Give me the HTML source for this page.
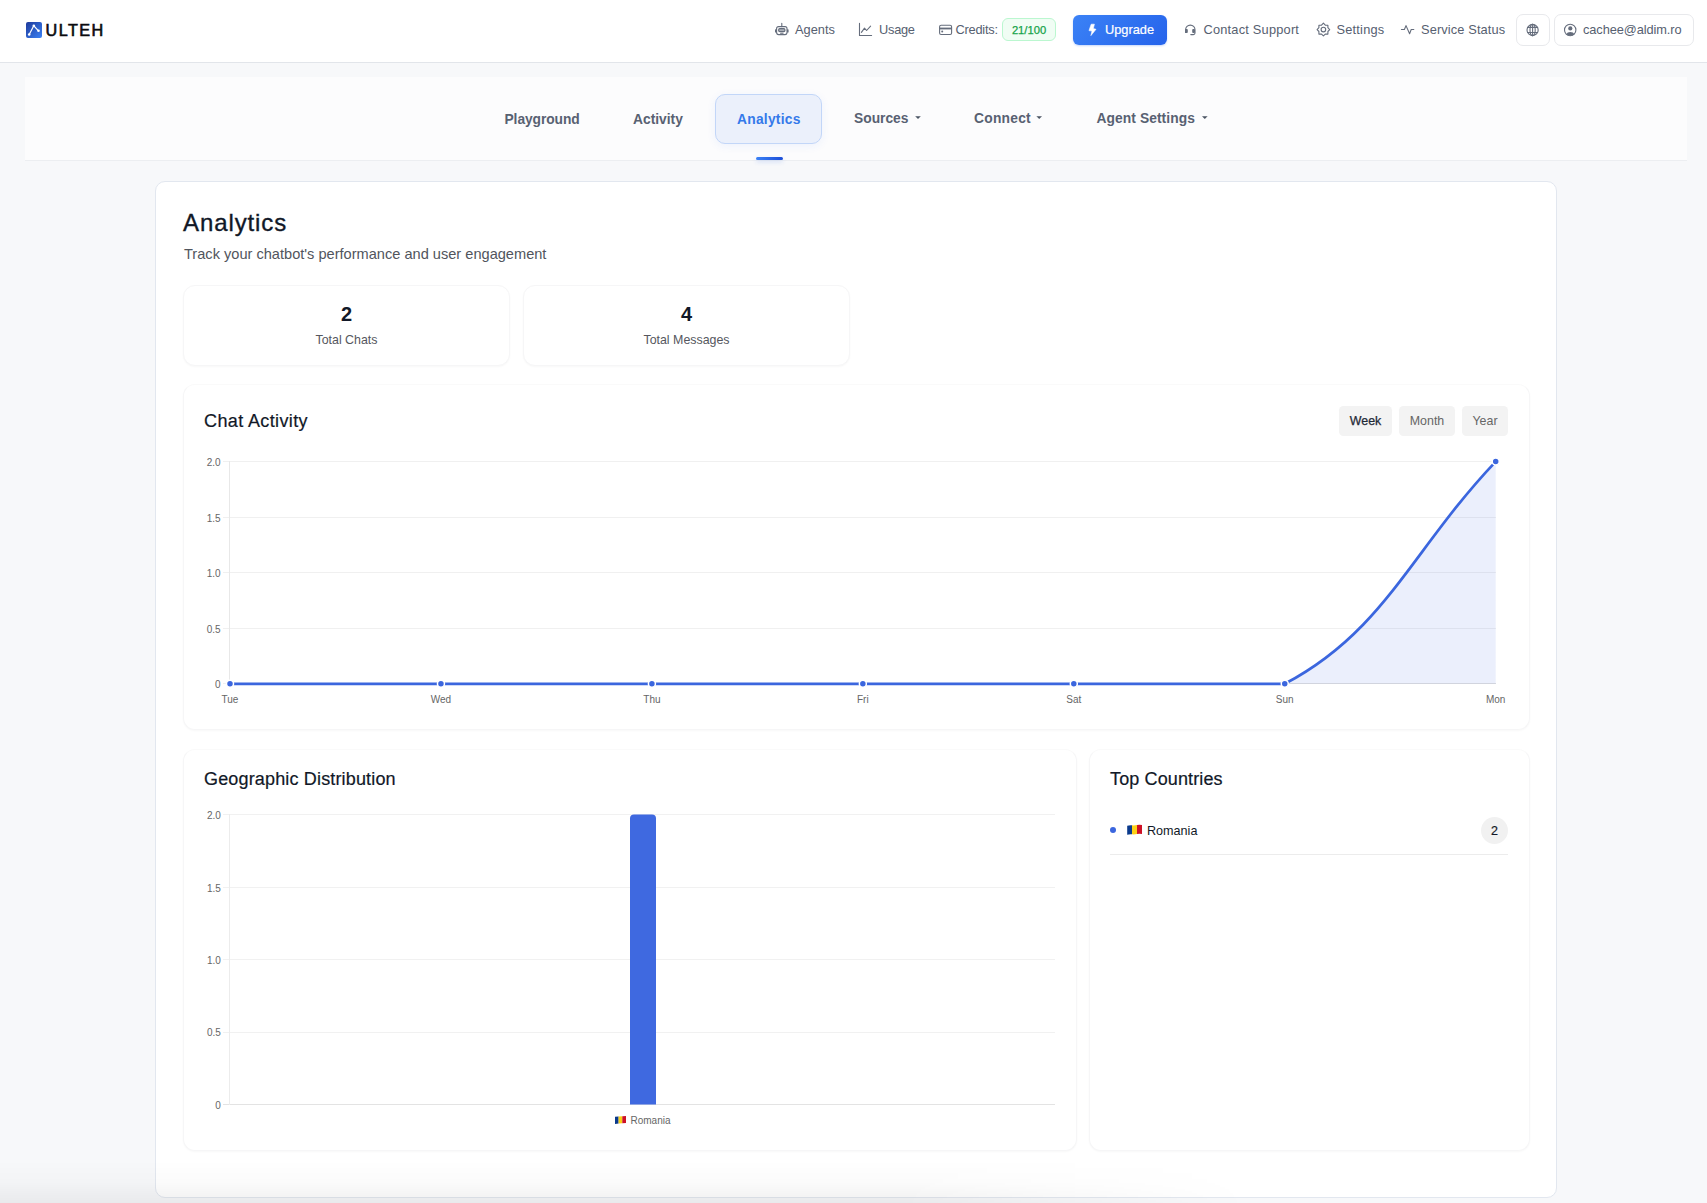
<!DOCTYPE html>
<html><head><meta charset="utf-8">
<style>
*{box-sizing:border-box;margin:0;padding:0}
html,body{width:1707px;height:1203px;overflow:hidden}
body{background:#f7f8fa;font-family:"Liberation Sans",sans-serif;position:relative;color:#111827}
.abs{position:absolute;white-space:nowrap}
#hdr{position:absolute;left:0;top:0;width:1707px;height:63px;background:#fff;border-bottom:1px solid #e2e5ea}
.nav{font-size:12.8px;line-height:16px;color:#566070;top:22px}
.badge{position:absolute;left:1002px;top:18px;width:54px;height:23px;border:1px solid #bbf7d0;background:#f0fdf4;border-radius:6px;color:#16a34a;font-size:11.2px;line-height:23px;text-align:center;-webkit-text-stroke:.25px #16a34a}
.upg{position:absolute;left:1073px;top:15px;width:94px;height:30px;border-radius:6px;background:linear-gradient(135deg,#3b82f6,#2563eb);box-shadow:0 1px 2px rgba(37,99,235,.25)}
.obtn{position:absolute;top:14px;height:32px;border:1px solid #e8e9ec;border-radius:7px;background:#fff}
#tabs{position:absolute;left:25px;top:77px;width:1662px;height:84px;background:#fcfcfd;border-bottom:1px solid #eceef1}
.tab{font-size:13.8px;font-weight:700;color:#586172;line-height:18px}
.pill{position:absolute;left:715px;top:94px;width:107px;height:50px;border:1px solid #c2d6f8;background:#ebf0fb;border-radius:10px;box-shadow:0 2px 10px rgba(37,99,235,.07)}
#main{position:absolute;left:155px;top:181px;width:1402px;height:1017px;background:#fff;border:1px solid #e2e7ef;border-radius:10px}
.card{position:absolute;background:#fff;border:1px solid #f6f6f7;border-radius:12px;box-shadow:0 1px 2px rgba(0,0,0,.03)}
.tbtn{position:absolute;top:406px;height:30px;background:#f3f3f3;border-radius:4.5px;font-size:12.4px;line-height:30px;text-align:center;color:#666}
</style></head><body>
<div id="hdr"></div>
<div class="abs" style="left:45.5px;top:21.2px;font-size:16.2px;font-weight:400;letter-spacing:1.45px;-webkit-text-stroke:.6px #0b0b0f;line-height:18px;color:#0b0b0f">ULTEH</div>
<div class="abs nav" style="left:795px">Agents</div>
<div class="abs nav" style="left:879px;letter-spacing:-.25px">Usage</div>
<div class="abs nav" style="left:955.5px;letter-spacing:-.23px">Credits:</div>
<div class="badge">21/100</div>
<div class="upg"></div>
<div class="abs nav" style="left:1105px;color:#fff;-webkit-text-stroke:.2px #fff">Upgrade</div>
<div class="abs nav" style="left:1203.5px;letter-spacing:.21px">Contact Support</div>
<div class="abs nav" style="left:1336.5px;letter-spacing:.21px">Settings</div>
<div class="abs nav" style="left:1421px;letter-spacing:.13px">Service Status</div>
<div class="obtn" style="left:1516px;width:34px"></div>
<div class="obtn" style="left:1553.5px;width:140.5px"></div>
<div class="abs nav" style="left:1583px;letter-spacing:-.09px">cachee@aldim.ro</div>

<div id="tabs"></div>
<div class="pill"></div>
<div class="abs tab" style="left:504.5px;top:111px;letter-spacing:-.08px">Playground</div>
<div class="abs tab" style="left:633px;top:111px">Activity</div>
<div class="abs tab" style="left:737px;top:111px;letter-spacing:.25px;color:#3479ea">Analytics</div>
<div class="abs tab" style="left:854px;top:110px">Sources</div>
<div class="abs tab" style="left:974px;top:110px;letter-spacing:.25px">Connect</div>
<div class="abs tab" style="left:1096.5px;top:110px;letter-spacing:.08px">Agent Settings</div>
<div class="abs" style="left:756px;top:157px;width:27px;height:3px;border-radius:2px;background:linear-gradient(90deg,#3b82f6,#1d4ed8);box-shadow:0 2px 4px rgba(37,99,235,.18)"></div>

<div id="main"></div>
<div class="abs" style="left:183px;top:207.5px;font-size:24px;line-height:30px;letter-spacing:.9px;-webkit-text-stroke:.35px #111827;color:#111827">Analytics</div>
<div class="abs" style="left:184px;top:245px;font-size:14.6px;line-height:18px;color:#51555d">Track your chatbot's performance and user engagement</div>

<div class="card" style="left:183px;top:285px;width:327px;height:81px"></div>
<div class="card" style="left:523px;top:285px;width:327px;height:81px"></div>
<div class="abs" style="left:183px;top:303px;width:327px;text-align:center;font-size:20px;font-weight:700;line-height:22px">2</div>
<div class="abs" style="left:183px;top:333px;width:327px;text-align:center;font-size:12.4px;line-height:15px;color:#55575e">Total Chats</div>
<div class="abs" style="left:523px;top:303px;width:327px;text-align:center;font-size:20px;font-weight:700;line-height:22px">4</div>
<div class="abs" style="left:523px;top:333px;width:327px;text-align:center;font-size:12.4px;line-height:15px;color:#55575e">Total Messages</div>

<div class="card" style="left:183px;top:384px;width:1347px;height:346px;border-top-color:#fafafa"></div>
<div class="abs" style="left:204px;top:410px;font-size:18px;line-height:22px;letter-spacing:.38px;-webkit-text-stroke:.2px #111827;color:#111827">Chat Activity</div>
<div class="tbtn" style="left:1339px;width:53px;color:#1f2937;-webkit-text-stroke:.25px #1f2937">Week</div>
<div class="tbtn" style="left:1399px;width:56px">Month</div>
<div class="tbtn" style="left:1462px;width:46px">Year</div>

<div class="card" style="left:183px;top:749px;width:894px;height:402px;border-top-color:#fafafa"></div>
<div class="card" style="left:1089px;top:749px;width:441px;height:402px;border-top-color:#fafafa"></div>
<div class="abs" style="left:204px;top:768px;font-size:18px;line-height:22px;letter-spacing:.16px;-webkit-text-stroke:.2px #111827;color:#111827">Geographic Distribution</div>
<div class="abs" style="left:1110px;top:768px;font-size:18px;line-height:22px;letter-spacing:.13px;-webkit-text-stroke:.2px #111827;color:#111827">Top Countries</div>
<div class="abs" style="left:1147px;top:822.7px;font-size:12.6px;line-height:16px;color:#111827">Romania</div>
<div class="abs" style="left:1481px;top:817px;width:27px;height:27px;border-radius:50%;background:#f1f1f1;font-size:12.5px;line-height:29px;text-align:center;-webkit-text-stroke:.2px #111827;color:#111827">2</div>
<div class="abs" style="left:1110px;top:854px;width:398px;height:1px;background:#ececec"></div>

<!-- header icons -->
<svg class="abs" style="left:0;top:0" width="1707" height="62" viewBox="0 0 1707 62">
<defs><linearGradient id="lg" x1="0" y1="0" x2="1" y2="1"><stop offset="0" stop-color="#1e3a9a"/><stop offset="1" stop-color="#3b82f6"/></linearGradient></defs>
<rect x="26" y="22" width="16" height="16" rx="2" fill="url(#lg)"/>
<polyline points="29.2,34.5 33.8,25.8 38.5,30.8" fill="none" stroke="#fff" stroke-width="1.2"/>
<circle cx="29.2" cy="34.5" r="1.3" fill="#fff"/><circle cx="33.8" cy="25.8" r="1.3" fill="#fff"/><circle cx="38.5" cy="30.8" r="1.3" fill="#fff"/>
<g fill="none" stroke="#656d7c" stroke-width="1.1" stroke-linecap="round" stroke-linejoin="round">
 <!-- robot -->
 <rect x="776.6" y="26.6" width="10.4" height="8" rx="2"/>
 <rect x="778.6" y="28.6" width="6.4" height="3" rx="1.3" fill="rgba(101,109,124,.55)"/>
 <line x1="781.8" y1="23.4" x2="781.8" y2="26.6"/>
 <line x1="780.6" y1="33.2" x2="783" y2="33.2"/>
 <!-- usage chart -->
 <polyline points="859.5,23.4 859.5,35.5 871.6,35.5"/>
 <polyline points="861.4,32.4 864.5,28.2 866.6,30.5 870.6,26.2"/>
 <!-- card -->
 <rect x="939.6" y="25.2" width="12" height="9.3" rx="1.5"/>
 <!-- headset -->
 <path d="M1185.6 32.5 V29.8 a4.7 4.7 0 0 1 9.4 0 V33 q0 1.6 -1.6 1.6 h-2.6"/>
 <!-- gear -->
 <path d="M1323.4 23.2 L1325.3 25.2 L1327.9 25.2 L1327.9 27.7 L1329.7 29.6 L1327.9 31.5 L1327.9 34.1 L1325.3 34.1 L1323.4 35.9 L1321.5 34.1 L1318.9 34.1 L1318.9 31.5 L1317.1 29.6 L1318.9 27.7 L1318.9 25.2 L1321.5 25.2 Z"/>
 <circle cx="1323.4" cy="29.6" r="2.3"/>
 <!-- pulse -->
 <polyline points="1401.4,29.5 1404.4,29.5 1406,25.6 1409.6,33.8 1411.2,29.5 1413.8,29.5"/>
 <!-- globe -->
 <circle cx="1532.6" cy="30" r="5.6"/>
 <ellipse cx="1532.6" cy="30" rx="2.6" ry="5.6"/>
 <line x1="1532.6" y1="24.4" x2="1532.6" y2="35.6"/>
 <line x1="1527.6" y1="27.4" x2="1537.6" y2="27.4"/>
 <line x1="1527.6" y1="32.5" x2="1537.6" y2="32.5"/>
 <!-- user -->
 <circle cx="1570.2" cy="30" r="5.7"/>
</g>
<g fill="#656d7c">
 <rect x="775" y="29.3" width="1.6" height="3.2" rx=".6"/><rect x="787" y="29.3" width="1.6" height="3.2" rx=".6"/>
 <rect x="939.6" y="27.6" width="12" height="1.8"/>
 <circle cx="942.2" cy="31.6" r="1"/>
 <rect x="1185" y="29" width="2.8" height="3.9" rx="1"/><rect x="1192.2" y="29" width="2.8" height="3.9" rx="1"/>
 <circle cx="1570.3" cy="28.4" r="2.1"/>
 <path d="M1566.2 34.2 q1 -2.2 4.1 -2.2 q3.1 0 4.1 2.2 q-1.6 1.5 -4.1 1.5 q-2.5 0 -4.1 -1.5z"/>
</g>
<path d="M1091.2 24.2 L1094.4 24.2 L1093.3 28.6 L1096 29.3 L1090.9 35.6 L1092 31.1 L1089 30.6 Z" fill="#fff" stroke="#fff" stroke-width=".6" stroke-linejoin="round"/>
</svg>

<!-- tab carets -->
<svg class="abs" style="left:0;top:100px" width="1707" height="40" viewBox="0 100 1707 40">
<g fill="#4b5563"><path d="M915.2 116.3 h5.6 l-2.8 2.8z"/><path d="M1036.4 116.3 h5.6 l-2.8 2.8z"/><path d="M1202 116.3 h5.6 l-2.8 2.8z"/></g>
</svg>

<!-- line chart -->
<svg class="abs" style="left:0;top:440px" width="1707" height="280" viewBox="0 440 1707 280">
<g stroke="#f0f0f0" stroke-width="1" shape-rendering="crispEdges">
 <line x1="223" y1="461.5" x2="1496" y2="461.5"/>
 <line x1="223" y1="517.5" x2="1496" y2="517.5"/>
 <line x1="223" y1="572.5" x2="1496" y2="572.5"/>
 <line x1="223" y1="628.5" x2="1496" y2="628.5"/>
 <line x1="223" y1="683.5" x2="230" y2="683.5"/>
</g>
<line x1="229.5" y1="461" x2="229.5" y2="684" stroke="#e8e8e8" shape-rendering="crispEdges"/>
<line x1="230" y1="683.5" x2="1496" y2="683.5" stroke="#dedede" shape-rendering="crispEdges"/>
<path d="M1284.75 683.8 C1384.7 631.16 1411.32 550.48 1495.70 461.6 L1495.70 683.8 Z" fill="rgba(59,102,222,0.10)"/>
<path d="M230 683.8 L1284.75 683.8 C1384.7 631.16 1411.32 550.48 1495.70 461.6" fill="none" stroke="#3b66de" stroke-width="2.7" stroke-linejoin="round"/>
<g fill="#3b66de" stroke="#fff" stroke-width="1.5"><circle cx="230.00" cy="683.8" r="3.5"/><circle cx="440.95" cy="683.8" r="3.5"/><circle cx="651.90" cy="683.8" r="3.5"/><circle cx="862.85" cy="683.8" r="3.5"/><circle cx="1073.80" cy="683.8" r="3.5"/><circle cx="1284.75" cy="683.8" r="3.5"/><circle cx="1495.70" cy="461.6" r="3.5"/></g>
<g font-family="Liberation Sans" font-size="10" fill="#666">
 <g text-anchor="end"><text x="220.6" y="466">2.0</text><text x="220.6" y="521.6">1.5</text><text x="220.6" y="577.1">1.0</text><text x="220.6" y="632.7">0.5</text><text x="220.6" y="688.2">0</text></g>
 <g text-anchor="middle"><text x="230.00" y="703">Tue</text><text x="440.95" y="703">Wed</text><text x="651.90" y="703">Thu</text><text x="862.85" y="703">Fri</text><text x="1073.80" y="703">Sat</text><text x="1284.75" y="703">Sun</text><text x="1495.70" y="703">Mon</text></g>
</g>
</svg>

<!-- bar chart -->
<svg class="abs" style="left:0;top:800px" width="1707" height="340" viewBox="0 800 1707 340">
<g stroke="#f1f1f1" stroke-width="1" shape-rendering="crispEdges">
 <line x1="223" y1="814.5" x2="1055" y2="814.5"/>
 <line x1="223" y1="887.5" x2="1055" y2="887.5"/>
 <line x1="223" y1="959.5" x2="1055" y2="959.5"/>
 <line x1="223" y1="1032.5" x2="1055" y2="1032.5"/>
</g>
<line x1="223" y1="1104.5" x2="1055" y2="1104.5" stroke="#e3e3e3" shape-rendering="crispEdges"/>
<line x1="229.5" y1="814" x2="229.5" y2="1105" stroke="#ececec" shape-rendering="crispEdges"/>
<path d="M630 1104.5 V818.5 q0 -4 4 -4 h18 q4 0 4 4 V1104.5z" fill="#3f69e0"/>
<g font-family="Liberation Sans" font-size="10" fill="#666">
 <g text-anchor="end"><text x="220.8" y="819.2">2.0</text><text x="220.8" y="891.6">1.5</text><text x="220.8" y="964">1.0</text><text x="220.8" y="1036.4">0.5</text><text x="220.8" y="1109">0</text></g>
 <text x="630.5" y="1124">Romania</text>
</g>
<g transform="translate(615,1116)"><path d="M0 0.8 L3.6 0.5 V7.6 L0 7.9Z" fill="#0a3a8c"/><path d="M3.6 0.5 L7.3 0.3 V7.3 L3.6 7.6Z" fill="#f7d116"/><path d="M7.3 0.3 L11 0 V7 L7.3 7.3Z" fill="#ce1126"/></g>
</svg>

<!-- top countries icons -->
<svg class="abs" style="left:1100px;top:815px" width="60" height="30" viewBox="1100 815 60 30">
<circle cx="1113" cy="830" r="3" fill="#3b66de"/>
<path d="M1127.2 825.8 Q1129.5 825 1132 825.3 V834.3 Q1129.5 834 1127.2 834.8Z" fill="#0a3a8c"/>
<path d="M1132 825.3 Q1134.5 825.6 1137 825 V834 Q1134.5 834.6 1132 834.3Z" fill="#fcd116"/>
<path d="M1137 825 Q1139.5 824.4 1142 825 V834 Q1139.5 833.4 1137 834Z" fill="#ce1126"/>
</svg>

<div class="abs" style="left:0;top:1160px;width:1707px;height:43px;background:linear-gradient(to bottom,rgba(0,0,0,0),rgba(0,0,0,.015) 50%,rgba(0,0,0,.055));-webkit-mask-image:linear-gradient(to right,#000 0,#000 900px,transparent 1250px);mask-image:linear-gradient(to right,#000 0,#000 900px,transparent 1250px)"></div>
</body></html>
